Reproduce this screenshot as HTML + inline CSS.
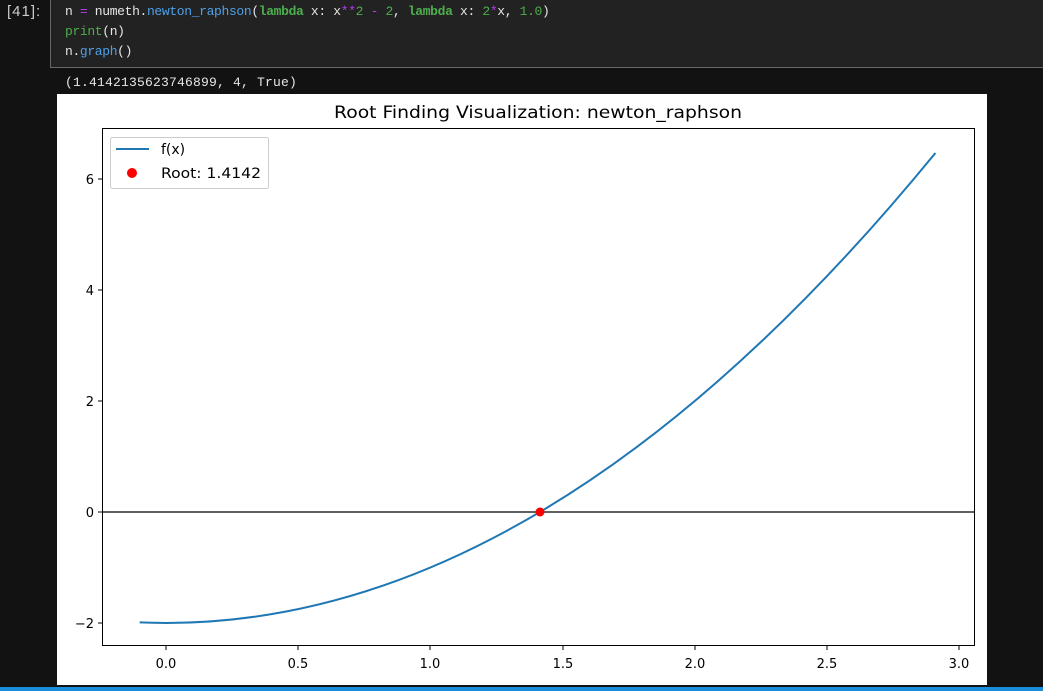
<!DOCTYPE html>
<html><head><style>
body{margin:0;width:1043px;height:691px;background:#121212;overflow:hidden;position:relative;font-family:"Liberation Mono",monospace}
.prompt{position:absolute;left:7px;top:3px;color:#cccccc;font-size:15px;font-family:"Liberation Sans",sans-serif;letter-spacing:1px}
.cell{position:absolute;left:50px;top:-1px;width:993px;height:68px;background:#222;border-left:1px solid #666;border-bottom:1px solid #666}
.code{position:absolute;left:14px;top:3px;font-size:13px;line-height:20px;color:#e6e6e6;white-space:pre;letter-spacing:-0.35px}
.g{color:#4eae4e}.b{color:#4ea0e8}.p{color:#b33ef0}.kw{color:#4eae4e;font-weight:bold}
.out{position:absolute;left:65px;top:75px;font-size:13px;color:#e6e6e6;white-space:pre;letter-spacing:0.2px}
.img{position:absolute;left:57px;top:94px;width:930px;height:591px;background:#fff}
.bar{position:absolute;left:0;top:687px;width:1043px;height:4px;background:#1a8cdc}
</style></head><body>
<div class="prompt">[41]:</div>
<div class="cell"><div class="code">n <span class="p">=</span> numeth.<span class="b">newton_raphson</span>(<span class="kw">lambda</span> x: x<span class="p">**</span><span class="g">2</span> <span class="p">-</span> <span class="g">2</span>, <span class="kw">lambda</span> x: <span class="g">2</span><span class="p">*</span>x, <span class="g">1.0</span>)
<span class="g">print</span>(n)
n.<span class="b">graph</span>()</div></div>
<div class="out">(1.4142135623746899, 4, True)</div>
<div class="img"></div>
<svg style="position:absolute;left:0;top:0" width="1043" height="691" font-family="DejaVu Sans, Liberation Sans, sans-serif">
<text x="334" y="118" font-size="17" textLength="408" lengthAdjust="spacingAndGlyphs" fill="#000">Root Finding Visualization: newton_raphson</text>
<line x1="102" y1="512" x2="975" y2="512" stroke="#000" stroke-width="1.2"/>
<path d="M139.6 622.4 Q537.5 639.2 935.4 153" fill="none" stroke="#1f77b4" stroke-width="2"/>
<circle cx="540" cy="512" r="4.5" fill="#ff0000"/>
<rect x="102.5" y="128.5" width="872" height="517" fill="none" stroke="#000" stroke-width="1"/>
<g stroke="#000" stroke-width="1">
<line x1="166" y1="646" x2="166" y2="650"/><line x1="298" y1="646" x2="298" y2="650"/><line x1="430" y1="646" x2="430" y2="650"/><line x1="563" y1="646" x2="563" y2="650"/><line x1="695" y1="646" x2="695" y2="650"/><line x1="827" y1="646" x2="827" y2="650"/><line x1="959" y1="646" x2="959" y2="650"/>
<line x1="98" y1="179" x2="102" y2="179"/><line x1="98" y1="290" x2="102" y2="290"/><line x1="98" y1="401" x2="102" y2="401"/><line x1="98" y1="512" x2="102" y2="512"/><line x1="98" y1="623" x2="102" y2="623"/>
</g>
<g font-size="13" fill="#000" text-anchor="middle">
<text x="166" y="668">0.0</text><text x="298" y="668">0.5</text><text x="430" y="668">1.0</text><text x="563" y="668">1.5</text><text x="695" y="668">2.0</text><text x="827" y="668">2.5</text><text x="959" y="668">3.0</text>
</g>
<g font-size="13" fill="#000" text-anchor="end">
<text x="94" y="184">6</text><text x="94" y="295">4</text><text x="94" y="406">2</text><text x="94" y="517">0</text><text x="94" y="628">−2</text>
</g>
<rect x="110.5" y="137.5" width="158" height="51" rx="2" fill="#fff" stroke="#ccc"/>
<line x1="116" y1="149" x2="149" y2="149" stroke="#1f77b4" stroke-width="2"/>
<text x="161" y="154" font-size="14">f(x)</text>
<circle cx="132" cy="173" r="5" fill="#ff0000"/>
<text x="161" y="178" font-size="14" textLength="100" lengthAdjust="spacingAndGlyphs">Root: 1.4142</text>
</svg>
<div class="bar"></div>
</body></html>
